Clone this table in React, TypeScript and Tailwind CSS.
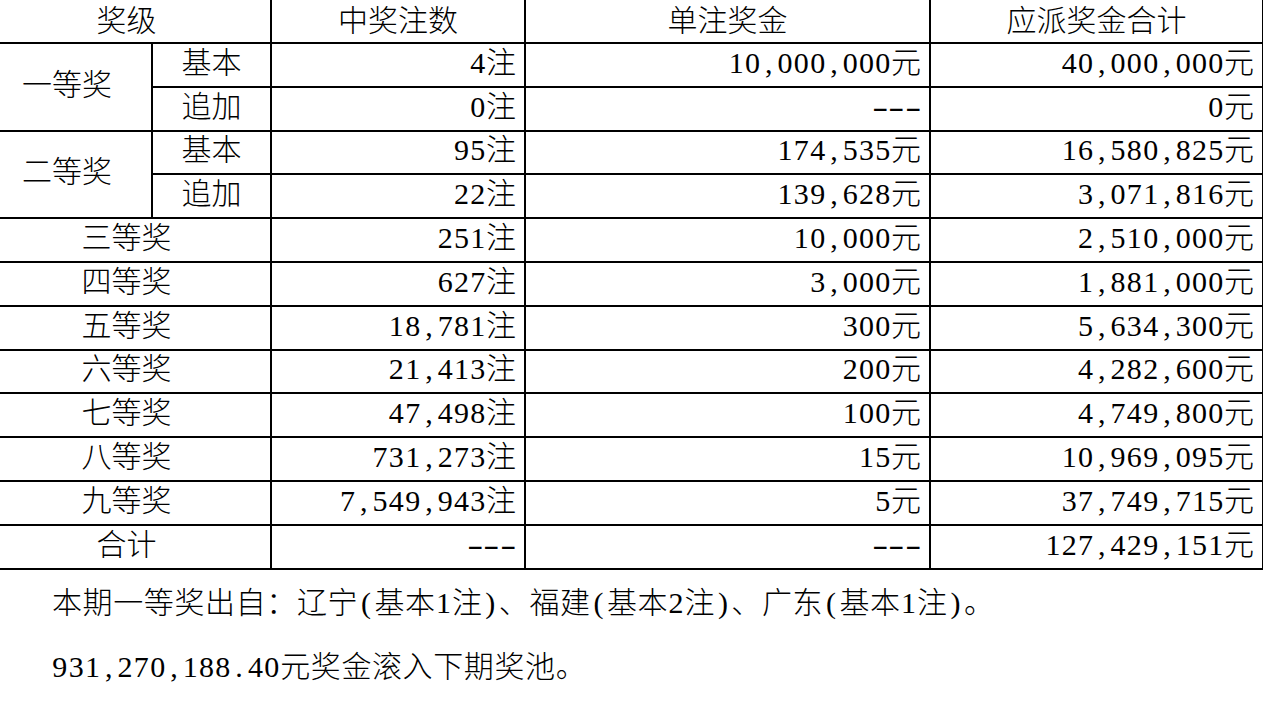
const rows: { name: string; sub?: string; span?: number; count: string; unit: string; total: string }[] = [
  { name: '一等奖', sub: '基本', span: 2, count: '4注', unit: '10,000,000元', total: '40,000,000元' },
  { name: '', sub: '追加', count: '0注', unit: '---', total: '0元' },
  { name: '二等奖', sub: '基本', span: 2, count: '95注', unit: '174,535元', total: '16,580,825元' },
  { name: '', sub: '追加', count: '22注', unit: '139,628元', total: '3,071,816元' },
  { name: '三等奖', count: '251注', unit: '10,000元', total: '2,510,000元' },
  { name: '四等奖', count: '627注', unit: '3,000元', total: '1,881,000元' },
  { name: '五等奖', count: '18,781注', unit: '300元', total: '5,634,300元' },
  { name: '六等奖', count: '21,413注', unit: '200元', total: '4,282,600元' },
  { name: '七等奖', count: '47,498注', unit: '100元', total: '4,749,800元' },
  { name: '八等奖', count: '731,273注', unit: '15元', total: '10,969,095元' },
  { name: '九等奖', count: '7,549,943注', unit: '5元', total: '37,749,715元' },
  { name: '合计', count: '---', unit: '---', total: '127,429,151元' },
];

// half-width cells for latin chars, like the SimSun original
function Txt({ s }: { s: string }) {
  return (
    <>
      {s.split('').map((c, i) =>
        c === '-' ? (
          <span key={i} className="inline-block w-[16.3px] text-center scale-x-[1.6]">
            {c}
          </span>
        ) : c.charCodeAt(0) < 128 ? (
          <span key={i} className="inline-block w-[16.3px] text-center">
            {c}
          </span>
        ) : (
          <span key={i}>{c}</span>
        )
      )}
    </>
  );
}

const cell = 'border-2 border-black p-0 pb-[4px] align-middle';

export default function App() {
  return (
    <div className="w-[1263px] h-[705px] overflow-hidden bg-white text-black font-['Liberation_Serif','Noto_Sans_CJK_SC',serif] font-light text-[30px] leading-[30px]">
      <table className="table-fixed border-collapse w-[1281px] ml-[-19px] mt-[-2px]">
        <colgroup>
          <col className="w-[170px]" />
          <col className="w-[119px]" />
          <col className="w-[254px]" />
          <col className="w-[405px]" />
          <col className="w-[333px]" />
        </colgroup>
        <tbody>
          <tr className="h-[44px]">
            <td colSpan={2} className="border-2 border-black p-0 text-center">奖级</td>
            <td className="border-2 border-black p-0 text-center">中奖注数</td>
            <td className="border-2 border-black p-0 text-center">单注奖金</td>
            <td className="border-2 border-black p-0 text-center">应派奖金合计</td>
          </tr>
          {rows.map((r, i) => (
            <tr key={i} className="h-[43.8px]">
              {r.sub ? (
                <>
                  {r.name && (
                    <td rowSpan={r.span} className={`${cell} text-center`}>{r.name}</td>
                  )}
                  <td className={`${cell} text-center`}>{r.sub}</td>
                </>
              ) : (
                <td colSpan={2} className={`${cell} text-center`}>{r.name}</td>
              )}
              <td className={`${cell} text-right pr-[8px]`}><Txt s={r.count} /></td>
              <td className={`${cell} text-right pr-[8px]`}><Txt s={r.unit} /></td>
              <td className={`${cell} text-right pr-[8px]`}><Txt s={r.total} /></td>
            </tr>
          ))}
        </tbody>
      </table>
      <div className="pl-[52px] pt-[11px] tracking-[0.6px]">
        <p className="leading-[44px]">
          <Txt s="本期一等奖出自：辽宁(基本1注)、福建(基本2注)、广东(基本1注)。" />
        </p>
        <p className="leading-[44px] mt-[20px]">
          <Txt s="931,270,188.40元奖金滚入下期奖池。" />
        </p>
      </div>
    </div>
  );
}
